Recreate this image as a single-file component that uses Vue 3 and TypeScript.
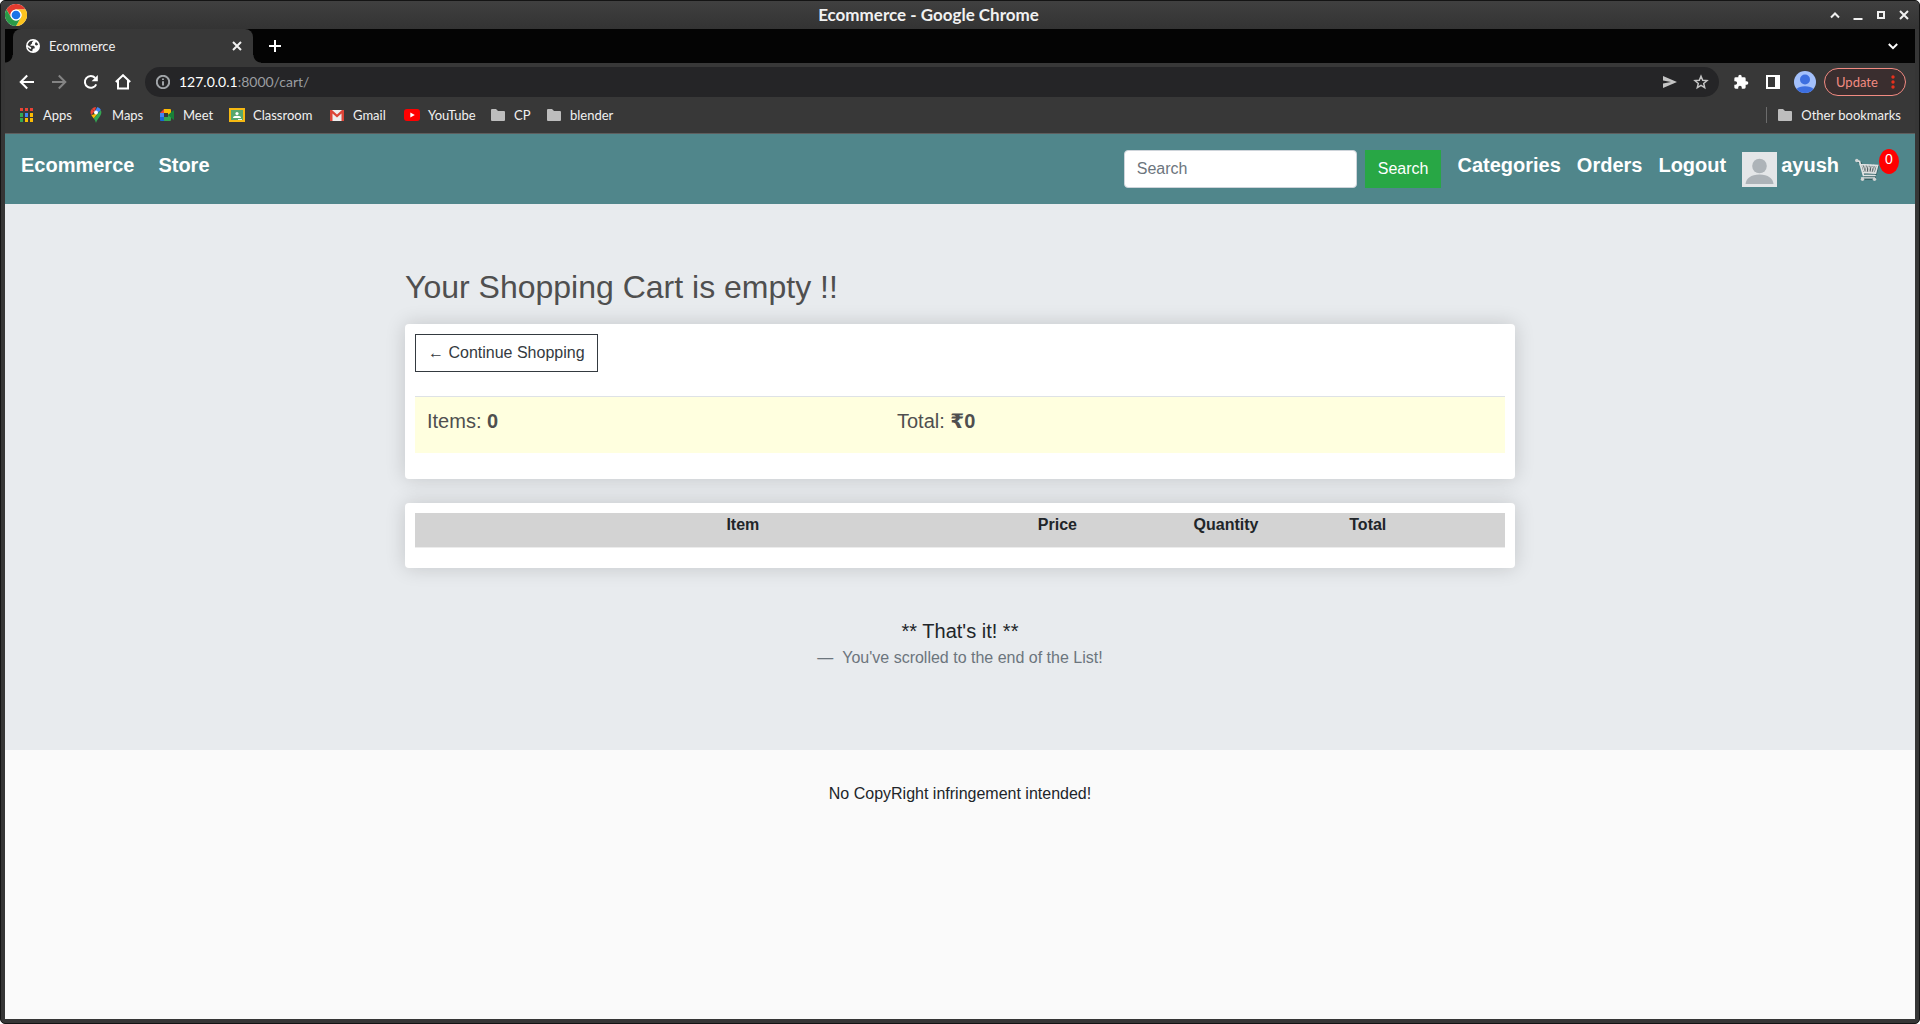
<script setup lang="ts">
import { ref } from 'vue'

interface Bookmark {
  name: string
  icon: 'apps' | 'maps' | 'meet' | 'classroom' | 'gmail' | 'youtube' | 'folder'
}

const bookmarks: Bookmark[] = [
  { name: 'Apps', icon: 'apps' },
  { name: 'Maps', icon: 'maps' },
  { name: 'Meet', icon: 'meet' },
  { name: 'Classroom', icon: 'classroom' },
  { name: 'Gmail', icon: 'gmail' },
  { name: 'YouTube', icon: 'youtube' },
  { name: 'CP', icon: 'folder' },
  { name: 'blender', icon: 'folder' },
]

const links: string[] = ['Categories', 'Orders', 'Logout']
const query = ref('')
const itemCount = ref(0)
const total = ref(0)
</script>

<template>
  <div class="window">
    <header class="titlebar">
      <svg class="logo" viewBox="0 0 48 48" aria-hidden="true">
        <circle cx="24" cy="24" r="24" fill="#fff" />
        <path d="M24 12h20.8A24 24 0 0 0 3.2 12l10.4 18A12 12 0 0 1 24 12z" fill="#e33b2e" />
        <path d="M34.4 30 24 48A24 24 0 0 0 44.8 12H24a12 12 0 0 1 10.4 18z" fill="#fcc31e" />
        <path d="M13.6 30 3.2 12A24 24 0 0 0 24 48l10.4-18a12 12 0 0 1-20.8 0z" fill="#2a9a48" />
        <circle cx="24" cy="24" r="12" fill="#fff" />
        <circle cx="24" cy="24" r="9.5" fill="#1a73e8" />
      </svg>
      <span class="title">Ecommerce - Google Chrome</span>
      <div class="controls">
        <button type="button" aria-label="Roll up"><svg viewBox="0 0 10 10"><path d="M1 7.5 5 3.5l4 4" /></svg></button>
        <button type="button" aria-label="Minimize"><svg viewBox="0 0 10 10"><path d="M.5 9h9" /></svg></button>
        <button type="button" aria-label="Maximize"><svg viewBox="0 0 10 10"><path d="M2 2h6v6H2z" /></svg></button>
        <button type="button" aria-label="Close window"><svg viewBox="0 0 10 10"><path d="m1 1 8 8M9 1 1 9" /></svg></button>
      </div>
    </header>

    <div class="frame">
      <div class="tabstrip">
        <div class="tab">
          <svg class="globe" viewBox="0 0 14 14" aria-hidden="true">
            <circle cx="7" cy="7" r="7" fill="#fff" />
            <path d="M7.6 1.8 6 3.2v1.4L4.6 5.7l-.2 1.1h3.4l1 1.2-.3 1.5H7.3l-.9 1.2v1.6a5.6 5.6 0 0 1-4.8-4.4l2.8 2.2.8-.6-.1-1.2L3 6.9l-1.4-.8A5.6 5.6 0 0 1 7.6 1.8zM10 3l1.4 1.2.7 1.6-1.5.8-1.4-.7-.2-1.5z" fill="#383838" />
          </svg>
          <span>Ecommerce</span>
          <button type="button" aria-label="Close tab"><svg viewBox="0 0 10 10"><path d="m1 1 8 8M9 1 1 9" /></svg></button>
        </div>
        <button class="newtab" type="button" aria-label="New tab"><svg viewBox="0 0 12 12"><path d="M6 0v12M0 6h12" /></svg></button>
        <button class="search-tabs" type="button" aria-label="Search tabs"><svg viewBox="0 0 10 10"><path d="m.8 3 4.2 4.2L9.2 3" /></svg></button>
      </div>

      <div class="toolbar">
        <button class="tool" type="button" aria-label="Back"><svg viewBox="0 0 16 16"><path d="M15 8H2M8.2 1.5 1.7 8l6.5 6.5" /></svg></button>
        <button class="tool dim" type="button" aria-label="Forward"><svg viewBox="0 0 16 16"><path d="M1 8h13M7.8 1.5 14.3 8l-6.5 6.5" /></svg></button>
        <button class="tool" type="button" aria-label="Reload">
          <svg viewBox="0 0 16 16"><path d="M13.2 10.3A5.9 5.9 0 1 1 12.2 4" /><path d="M14.8 1v6.2H8.6z" fill="#fff" stroke="none" /></svg>
        </button>
        <button class="tool" type="button" aria-label="Home"><svg viewBox="0 0 16 16"><path d="M.8 8 8 1.2 15.2 8M3 6.5v8h10v-8" /></svg></button>
        <div class="omnibox">
          <svg class="info" viewBox="0 0 14 14" aria-hidden="true"><circle cx="7" cy="7" r="6.2" /><path d="M7 6.2v4.3M7 3.4v1.6" /></svg>
          <span class="url"><b>127.0.0.1</b>:8000/cart/</span>
          <button type="button" aria-label="Share"><svg class="send" viewBox="0 0 14 12"><path d="M0 0 14 6 0 12V7.4L8 6 0 4.6z" /></svg></button>
          <button type="button" aria-label="Bookmark this tab">
            <svg class="star" viewBox="0 0 16 16"><path d="m8 2.2 1.7 4 4.3.4-3.3 2.8 1 4.2L8 11.4l-3.7 2.2 1-4.2L2 6.6l4.3-.4z" /></svg>
          </button>
        </div>
        <button class="tool" type="button" aria-label="Extensions">
          <svg viewBox="0 0 24 24"><path d="M20.5 11H19V7a2 2 0 0 0-2-2h-4V3.5a2.5 2.5 0 0 0-5 0V5H4a2 2 0 0 0-2 2v3.8h1.5a2.7 2.7 0 0 1 0 5.4H2V20c0 1.1.9 2 2 2h3.8v-1.5a2.7 2.7 0 0 1 5.4 0V22H17a2 2 0 0 0 2-2v-4h1.5a2.5 2.5 0 0 0 0-5z" fill="#fff" stroke="none" /></svg>
        </button>
        <button class="tool" type="button" aria-label="Side panel">
          <svg viewBox="0 0 16 16"><path d="M1 1h14v14H1zM3 3v10h7V3z" fill="#fff" fill-rule="evenodd" stroke="none" /></svg>
        </button>
        <button class="tool" type="button" aria-label="Profile">
          <svg class="profile" viewBox="0 0 22 22"><circle cx="11" cy="11" r="11" fill="#a3c0fb" /><circle cx="11" cy="8.5" r="5" fill="#3d6fe0" /><path d="M2.5 18a9.5 5 0 0 1 17 0A11 11 0 0 1 2.5 18z" fill="#3d6fe0" /></svg>
        </button>
        <button class="update" type="button">
          <span>Update</span>
          <svg viewBox="0 0 4 14" aria-hidden="true"><circle cx="2" cy="2" r="1.7" /><circle cx="2" cy="7" r="1.7" /><circle cx="2" cy="12" r="1.7" /></svg>
        </button>
      </div>

      <nav class="bookmarks" aria-label="Bookmarks">
        <a v-for="mark in bookmarks" :key="mark.name" href="#">
          <svg v-if="mark.icon === 'apps'" viewBox="0 0 16 16">
            <path d="M1 1h3v3H1zM6 1h3v3H6zM11 1h3v3h-3z" fill="#ea4335" />
            <path d="M1 6h3v4H1zM1 11h3v4H1z" fill="#34a853" />
            <path d="M6 6h3v4H6z" fill="#4285f4" />
            <path d="M11 6h3v4h-3zM6 11h3v4H6zM11 11h3v4h-3z" fill="#fbbc04" />
          </svg>
          <svg v-else-if="mark.icon === 'maps'" viewBox="0 0 16 16">
            <path d="M8 0a5.4 5.4 0 0 0-4.2 2l3 2.5z" fill="#ea4335" />
            <path d="M8 0c2.2 0 4 1.2 4.9 3L9.8 6.2 6.8 4.5 9.2.2z" fill="#4285f4" />
            <path d="M3.8 2a5.3 5.3 0 0 0-.5 6l3.1-3.6z" fill="#ea4335" />
            <path d="M3.3 8c.6 1.2 1.6 2.3 2.5 3.5l3.9-5z" fill="#fbbc04" />
            <path d="M12.9 3c1.3 3-.1 5.3-1.8 7.4C9.4 12.5 8.8 13.5 8 16c-.5-1.8-1.2-3.1-2.2-4.5z" fill="#34a853" />
            <circle cx="8" cy="5.4" r="2" fill="#fff" />
          </svg>
          <svg v-else-if="mark.icon === 'meet'" viewBox="0 0 16 16">
            <path d="M5 2v4H1z" fill="#ea4335" />
            <path d="M1 6h4v4H1z" fill="#4285f4" />
            <path d="M1 10h4v4H2a1 1 0 0 1-1-1z" fill="#1967d2" />
            <path d="M5 2h6a1 1 0 0 1 1 1v4l-3 1V6H5z" fill="#fbbc04" />
            <path d="M5 10h4V8l3-1v6a1 1 0 0 1-1 1H5z" fill="#34a853" />
            <path d="m9 8 5-4.6q1-.6 1 .4v8.400q0 1-1 .4z" fill="#188038" />
          </svg>
          <svg v-else-if="mark.icon === 'classroom'" viewBox="0 0 16 16">
            <path d="M0 1h16v14H0z" fill="#f6b912" />
            <path d="M2 3h12v10H2z" fill="#57a76f" />
            <circle cx="8" cy="6.5" r="1.6" fill="#fff" />
            <path d="M4 11q0-2.2 4-2.200t4 2.200z" fill="#fff" />
            <path d="M9 12h4v1H9z" fill="#e8f5e9" />
          </svg>
          <svg v-else-if="mark.icon === 'gmail'" viewBox="0 0 16 16">
            <path d="M1 3h14v11H1z" fill="#eee" />
            <path d="M1 3h2l5 4.5L13 3h2v11h-2.500V6.500L8 10.500l-4.500-4V14H1z" fill="#dc4437" />
          </svg>
          <svg v-else-if="mark.icon === 'youtube'" viewBox="0 0 16 16">
            <rect y="2" width="16" height="12" rx="3" fill="#f00" />
            <path d="M6.3 5.4v5.2L10.8 8z" fill="#fff" />
          </svg>
          <svg v-else viewBox="0 0 16 16"><path d="M1 3q0-1 1-1h4l2 2h6q1 0 1 1v8q0 1-1 1H2q-1 0-1-1z" fill="#bdbdbd" /></svg>
          <span>{{ mark.name }}</span>
        </a>
        <a class="other" href="#">
          <svg viewBox="0 0 16 16"><path d="M1 3q0-1 1-1h4l2 2h6q1 0 1 1v8q0 1-1 1H2q-1 0-1-1z" fill="#bdbdbd" /></svg>
          <span>Other bookmarks</span>
        </a>
      </nav>

      <div class="page">
        <nav class="navbar" aria-label="Site">
          <a class="brand" href="#">Ecommerce</a>
          <a href="#">Store</a>
          <form class="search" @submit.prevent>
            <input v-model="query" type="search" placeholder="Search" aria-label="Search" />
            <button type="submit">Search</button>
          </form>
          <a v-for="link in links" :key="link" href="#">{{ link }}</a>
          <a class="user" href="#">
            <svg viewBox="0 0 35 35" aria-hidden="true">
              <path d="M0 0h35v35H0z" fill="#e4e6e8" />
              <circle cx="17.5" cy="14" r="7.3" fill="#adb3b8" />
              <path d="M3.5 32q1-9 14-9.500 13 .5 14 9.500z" fill="#adb3b8" />
            </svg>
            <span>ayush</span>
          </a>
          <a class="cart" href="#" aria-label="Cart">
            <svg viewBox="0 0 24 24" aria-hidden="true">
              <g fill="none" transform="translate(1 1)" stroke="#2e5558" stroke-width="1.8" opacity=".8"><path d="M1.5 2.5 5 4l4 14h11M6 6.5l16 1-2 7.500L8 14M7 20h13" /></g>
              <path d="M5 6.5 22.500 7.500 20.500 15 8 14z" fill="#535e60" />
              <g fill="none" stroke="#e0e3e3" stroke-linecap="round">
                <path d="M1.5 2.5 4.5 3.5 8.5 17.5M8.5 17.5H20M5 6.5l17.500 1-2 7.500L8 14.500" stroke-width="1.7" />
                <path d="m7 7 2.500 7M10 7l2 7.500M13 7l1.500 7.500M16 7.200l1 7.500M19 7.300v7.500M9.500 7 8.500 13M12.500 7l-2 7.500M15.500 7 13 14.500M18.500 7l-3 7.500M21 7.500l-3 7" stroke-width=".9" />
                <path d="M6.5 19.8h13" stroke-width="1.3" />
              </g>
              <g fill="#d0d4d4"><circle cx="7.5" cy="21.2" r="1.7" /><circle cx="19.5" cy="21.2" r="1.7" /><circle cx="1.8" cy="2.5" r="1.7" /></g>
            </svg>
            <span class="badge">{{ itemCount }}</span>
          </a>
        </nav>

        <main>
          <div class="container">
            <h2>Your Shopping Cart is empty !!</h2>
            <section class="card">
              <button class="continue" type="button">← Continue Shopping</button>
              <table class="summary">
                <tbody>
                  <tr>
                    <td>Items: <strong>{{ itemCount }}</strong></td>
                    <td>Total: <strong><span class="rupee">₹</span>{{ total }}</strong></td>
                  </tr>
                </tbody>
              </table>
            </section>
            <section class="card">
              <table class="items">
                <colgroup><col class="wide" /><col class="wide" /><col /><col /><col /></colgroup>
                <thead>
                  <tr>
                    <td></td>
                    <th scope="col">Item</th>
                    <th scope="col">Price</th>
                    <th scope="col">Quantity</th>
                    <th scope="col">Total</th>
                  </tr>
                </thead>
              </table>
            </section>
            <blockquote>
              <p>** That's it! **</p>
              <footer>— &nbsp;You've scrolled to the end of the List!</footer>
            </blockquote>
          </div>
        </main>
        <footer class="site-footer">No CopyRight infringement intended!</footer>
      </div>
    </div>
  </div>
</template>

<style>
body {
  background: #fff;
}
</style>

<style scoped>
.window,
.window * {
  box-sizing: border-box;
}

.window {
  display: flex;
  flex-direction: column;
  min-height: 100vh;
  border: 1px solid #141414;
  border-radius: 5px;
  background: #363636;
  color: #f1f1f1;
  font: 13px/20px 'Lato', 'Open Sans', sans-serif;
}

svg {
  display: block;
  flex: none;
}

button {
  display: flex;
  align-items: center;
  justify-content: center;
  margin: 0;
  padding: 0;
  border: 0;
  background: none;
  color: inherit;
  font: inherit;
}

a {
  color: inherit;
  text-decoration: none;
}

.titlebar {
  display: flex;
  align-items: center;
  height: 28px;
  padding: 0 10px 0 4px;
  border-radius: 4px 4px 0 0;
  background: linear-gradient(#404040, #333);
}

.logo {
  width: 22px;
  height: 22px;
}

.title {
  flex: 1;
  font-size: 17px;
  font-weight: 700;
  text-align: center;
}

.controls {
  display: flex;
  gap: 13px;
}

.controls svg,
.tab button svg {
  width: 10px;
  height: 10px;
  fill: none;
  stroke: #f1f1f1;
  stroke-width: 2;
}

.frame {
  display: flex;
  flex: 1;
  flex-direction: column;
  padding: 0 4px 4px;
}

.tabstrip {
  display: flex;
  align-items: center;
  height: 34px;
  padding: 0 17px 0 8px;
  background: #040404;
}

.tab {
  position: relative;
  display: flex;
  align-items: center;
  gap: 9px;
  width: 240px;
  height: 34px;
  padding: 0 11px 0 13px;
  border-radius: 8px 8px 0 0;
  background: #383838;
}

.tab::before,
.tab::after {
  position: absolute;
  bottom: 0;
  width: 8px;
  height: 8px;
  content: '';
}

.tab::before {
  right: 100%;
  background: radial-gradient(circle at 0 0, transparent 7px, #383838 8px);
}

.tab::after {
  left: 100%;
  background: radial-gradient(circle at 100% 0, transparent 7px, #383838 8px);
}

.tab button {
  margin-left: auto;
}

.globe {
  width: 14px;
  height: 14px;
}

.newtab {
  margin-left: 16px;
}

.newtab svg {
  width: 12px;
  height: 12px;
  stroke: #fff;
  stroke-width: 2;
}

.search-tabs {
  margin-left: auto;
}

.search-tabs svg {
  width: 10px;
  height: 10px;
  fill: none;
  stroke: #fff;
  stroke-width: 2;
}

.toolbar {
  display: flex;
  align-items: center;
  gap: 16px;
  height: 38px;
  padding: 0 9px 0 14px;
  background: #383838;
}

.tool {
  width: 16px;
}

.tool svg {
  width: 16px;
  height: 16px;
  fill: none;
  stroke: #fff;
  stroke-width: 2;
}

.tool.dim svg {
  stroke: #848484;
}

.tool svg.profile {
  width: 22px;
  height: 22px;
  stroke: none;
}

.omnibox {
  display: flex;
  flex: 1;
  align-items: center;
  gap: 16px;
  height: 30px;
  margin-left: -2px;
  margin-right: -2px;
  padding: 0 10px 0 11px;
  border-radius: 15px;
  background: #252527;
}

.info {
  width: 14px;
  height: 14px;
  fill: none;
  stroke: #a0a4a8;
  stroke-width: 2;
}

.url {
  flex: 1;
  margin-left: -7px;
  color: #9b9da0;
  font-size: 14px;
}

.url b {
  color: #fff;
  font-weight: 400;
}

.send {
  width: 14px;
  height: 12px;
  fill: #c4c4c4;
}

.star {
  width: 16px;
  height: 16px;
  fill: none;
  stroke: #c4c4c4;
  stroke-width: 1.5;
}

.update {
  justify-content: space-between;
  width: 82px;
  height: 28px;
  margin-left: -5px;
  padding: 0 10px 0 11px;
  border: 1px solid #f28b82;
  border-radius: 14px;
  background: #3a2e2f;
  color: #f28b82;
}

.update svg {
  width: 4px;
  height: 14px;
  fill: #e8301c;
}

.bookmarks {
  display: grid;
  grid-template-columns: 69px 71px 70px 100px 75px 86px 56px 80px 1fr;
  align-items: center;
  height: 33px;
  padding: 0 14px 4px;
  border-bottom: 1px solid #5e5e5e;
  background: #383838;
}

.bookmarks a {
  display: flex;
  align-items: center;
  gap: 8px;
  white-space: nowrap;
}

.bookmarks svg {
  width: 16px;
  height: 16px;
}

.bookmarks .other {
  justify-self: end;
  height: 16px;
  padding-left: 10px;
  border-left: 1px solid #6c6c6c;
}

.page {
  display: flex;
  flex: 1;
  flex-direction: column;
  background: #fafafa;
  color: #212529;
  font: 16px/24px 'Liberation Sans', Arial, sans-serif;
}

.navbar {
  display: flex;
  align-items: flex-start;
  gap: 16px;
  padding: 16px;
  background: #50868b;
  color: #fff;
  font-size: 20px;
  font-weight: 700;
  line-height: 30px;
}

.brand {
  margin-right: 8px;
}

.search {
  display: flex;
  gap: 8px;
  margin-left: auto;
}

.search input {
  width: 233px;
  height: 38px;
  padding: 6px 12px;
  border: 1px solid #ced4da;
  border-radius: 4px;
  background: #fff;
  color: #495057;
  font: inherit;
  font-size: 16px;
  font-weight: 400;
  line-height: 24px;
}

.search input::placeholder {
  color: #6c757d;
}

.search button {
  height: 38px;
  padding: 0 13px;
  background: #28a745;
  font-size: 16px;
  font-weight: 400;
}

.user {
  display: flex;
  gap: 4px;
}

.user svg {
  width: 35px;
  height: 35px;
  margin-top: 2px;
}

.cart {
  display: flex;
}

.cart svg {
  width: 24px;
  height: 24px;
  margin-top: 8px;
}

.badge {
  width: 20px;
  height: 25px;
  margin-top: -1px;
  border-radius: 50%;
  background: #f00;
  font-size: 14px;
  font-weight: 400;
  line-height: 20px;
  text-align: center;
}

main {
  padding: 64px 15px 80px;
  background: #e8ebee;
}

.container {
  max-width: 1110px;
  margin: 0 auto;
}

h2 {
  margin: 0 0 18px;
  color: #4f4f4f;
  font-size: 32px;
  font-weight: 400;
  line-height: 38px;
}

.card {
  padding: 10px;
  border-radius: 4px;
  background: #fff;
  box-shadow: 0 0 20px rgba(0, 0, 0, 0.16);
}

.card + .card {
  margin-top: 24px;
  padding-bottom: 20px;
}

.continue {
  height: 38px;
  padding: 0 12px;
  border: 1px solid #343a40;
  color: #343a40;
}

table {
  width: 100%;
  border-spacing: 0;
  table-layout: fixed;
  text-align: left;
}

.summary {
  margin: 24px 0 16px;
  border-top: 1px solid #dee2e6;
  background: #ffffdf;
  color: #4f4f4f;
  font-size: 20px;
}

.summary td {
  height: 56px;
  padding: 0 12px 8px;
}

.summary td:first-child {
  width: 470px;
}

.rupee {
  font-family: 'DejaVu Sans', sans-serif;
  line-height: 1;
}

.items {
  border-bottom: 1px solid #ececec;
  background: #d3d3d3;
}

.items th,
.items td {
  padding: 0 0 10px;
}

.wide {
  width: 28.5714%;
}

blockquote {
  margin: 48px 0 0;
  text-align: center;
}

blockquote p {
  margin: 0;
  font-size: 20px;
  line-height: 30px;
}

blockquote footer {
  color: #6c757d;
}

.site-footer {
  padding: 32px 16px;
  text-align: center;
}
</style>
